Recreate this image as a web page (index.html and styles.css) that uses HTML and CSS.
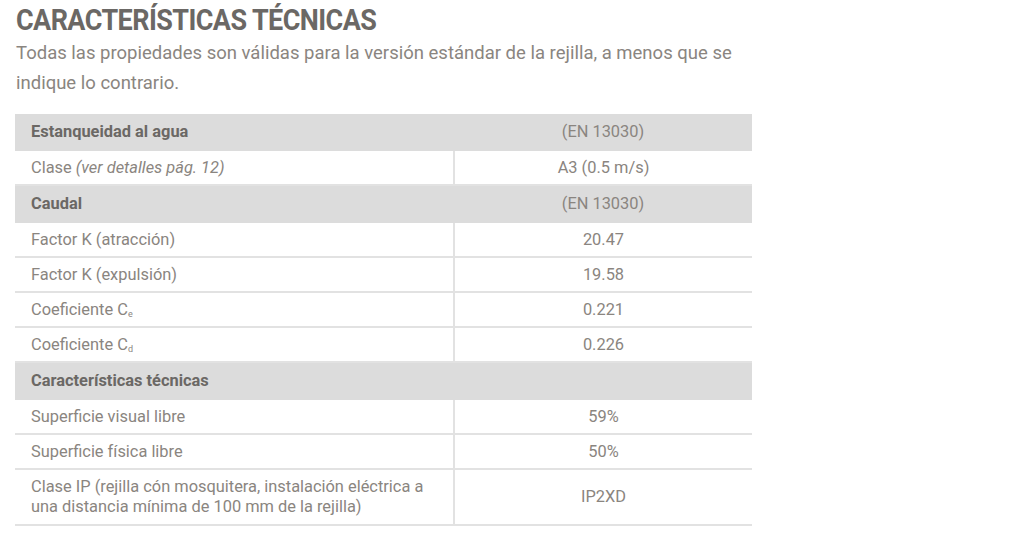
FILE: index.html
```html
<!DOCTYPE html>
<html lang="es">
<head>
<meta charset="utf-8">
<title>Características técnicas</title>
<link rel="stylesheet" href="styles.css">
</head>
<body>
<main class="page">
  <h1 class="title">CARACTERÍSTICAS TÉCNICAS</h1>
  <p class="intro">Todas las propiedades son válidas para la versión estándar de la rejilla, a menos que se indique lo contrario.</p>
  <table class="specs">
    <colgroup><col class="c1"><col class="c2"></colgroup>
    <tr class="head"><th>Estanqueidad al agua</th><td>(EN 13030)</td></tr>
    <tr><th>Clase <em>(ver detalles pág. 12)</em></th><td>A3 (0.5 m/s)</td></tr>
    <tr class="head"><th>Caudal</th><td>(EN 13030)</td></tr>
    <tr><th>Factor K (atracción)</th><td>20.47</td></tr>
    <tr><th>Factor K (expulsión)</th><td>19.58</td></tr>
    <tr><th>Coeficiente C<sub>e</sub></th><td>0.221</td></tr>
    <tr><th>Coeficiente C<sub>d</sub></th><td>0.226</td></tr>
    <tr class="head"><th>Características técnicas</th><td></td></tr>
    <tr><th>Superficie visual libre</th><td>59%</td></tr>
    <tr><th>Superficie física libre</th><td>50%</td></tr>
    <tr class="tall"><th>Clase IP (rejilla cón mosquitera, instalación eléctrica a una distancia mínima de 100 mm de la rejilla)</th><td>IP2XD</td></tr>
  </table>
</main>
</body>
</html>
```

FILE: styles.css
```css
html, body {
  margin: 0;
  padding: 0;
  background: #ffffff;
}
body {
  font-family: Roboto, "Noto Sans", "Liberation Sans", sans-serif;
  color: #8a8580;
}
.page {
  padding: 4px 0 0 15px;
}
.title {
  margin: 0 0 0 1px;
  font-size: 29px;
  line-height: 32px;
  font-weight: 700;
  color: #6b6865;
  letter-spacing: -0.6px;
  transform: scaleX(0.93);
  transform-origin: left center;
  white-space: nowrap;
}
.intro {
  margin: 2px 0 0 1px;
  width: 740px;
  font-size: 18.5px;
  line-height: 30px;
  color: #8a8580;
}
.specs {
  margin-top: 16px;
  width: 737px;
  border-collapse: collapse;
  font-size: 16.4px;
}
.specs .c1 { width: 439px; }
.specs .c2 { width: 298px; }
.specs th, .specs td {
  height: 33px;
  padding: 0 16px;
  line-height: 20px;
  font-weight: 400;
  color: #8a8580;
  border-bottom: 2px solid #e2e2e2;
  vertical-align: middle;
}
.specs th {
  text-align: left;
  border-right: 2px solid #e2e2e2;
}
.specs td {
  text-align: center;
}
.specs em {
  font-style: italic;
}
.specs sub {
  font-size: 9px;
  line-height: 0;
  vertical-align: -2px;
}
.specs .head th, .specs .head td {
  background: #dcdcdc;
  height: 35px;
  border-bottom: 2px solid #dcdcdc;
  border-right: none;
}
.specs .head th {
  font-weight: 700;
  color: #6b6865;
}
.specs .tall th, .specs .tall td {
  height: 54px;
}
.specs .tall th {
  padding-right: 20px;
}
```
